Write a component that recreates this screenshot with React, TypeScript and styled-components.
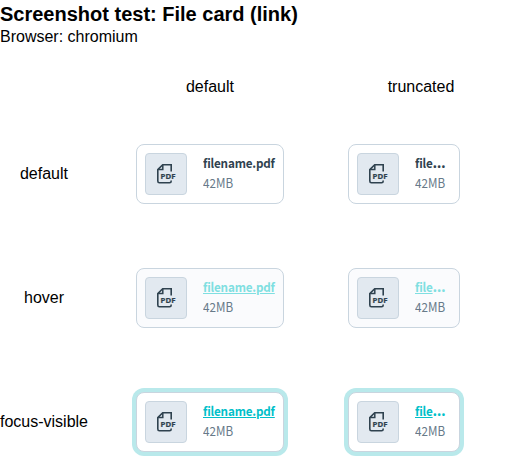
import React from 'react';
import styled, { createGlobalStyle, css } from 'styled-components';

type CardState = 'default' | 'hover' | 'focus-visible';

const GlobalStyle = createGlobalStyle`
  *, *::before, *::after { box-sizing: border-box; }
  body {
    margin: 0;
    background: #fff;
    color: #000;
    font: 16px/18px "Liberation Sans", Arial, sans-serif;
  }
`;

const Page = styled.main`
  width: 512px;
  height: 468px;
  overflow: hidden;
`;

const Title = styled.h1`
  margin: 0;
  padding-top: 3px;
  font-size: 20px;
  line-height: 23px;
  font-weight: 700;
`;

const Subtitle = styled.p`
  margin: 2px 0 0;
`;

const Grid = styled.div`
  display: grid;
  grid-template-columns: 104px 212px 210px;
  grid-template-rows: 51px repeat(3, 124px);
  padding-top: 15px;
`;

const Row = styled.div`
  display: contents;
`;

const Label = styled.div`
  display: flex;
  align-items: center;
  justify-content: center;
  white-space: nowrap;
`;

const RowLabel = styled(Label)`
  padding-right: 16px;
`;

const Cell = styled.div`
  display: flex;
  align-items: center;
  padding: 0 32px;
`;

const Card = styled.article<{ $state: CardState; $truncated: boolean }>`
  display: flex;
  align-items: center;
  gap: 16px;
  width: ${({ $truncated }) => ($truncated ? 112 : 148)}px;
  height: 60px;
  padding: 8px;
  border: 1px solid #c9d5df;
  border-radius: 8px;
  background: ${({ $state }) => ($state === 'hover' ? '#fafbfd' : '#fff')};
  box-shadow: ${({ $state }) => ($state === 'focus-visible' ? '0 0 0 4px #b9e9eb' : 'none')};
`;

const Thumb = styled.div`
  display: flex;
  flex: none;
  align-items: center;
  justify-content: center;
  width: 42px;
  height: 42px;
  border: 1px solid #c9d5df;
  border-radius: 4px;
  background: #e2e9f0;
`;

const Details = styled.div`
  flex: none;
  padding-bottom: 2px;
  font-family: "Noto Sans CJK SC", "Noto Sans", sans-serif;
  font-size: 12.5px;
  line-height: 20px;
  white-space: nowrap;
  transform: scaleX(0.935);
  transform-origin: left;
`;

const nameColors: Record<CardState, string> = {
  default: '#2f424f',
  hover: '#7fdfe1',
  'focus-visible': '#00bfc9',
};

const FileName = styled.div<{ $state: CardState }>`
  font-weight: 700;
  letter-spacing: -0.2px;
  color: ${({ $state }) => nameColors[$state]};
`;

const NameText = styled.span<{ $state: CardState }>`
  ${({ $state }) =>
    $state !== 'default' &&
    css`
      text-decoration: underline;
      text-decoration-thickness: 1px;
      text-underline-offset: 1px;
      text-decoration-skip-ink: auto;
    `}
`;

const Ellipsis = styled.span`
  font-family: "Noto Sans", sans-serif;
  font-size: 16px;
  line-height: 1;
`;

const Size = styled.div`
  color: #677a89;
`;

const PdfIcon = () => (
  <svg width="24" height="24" viewBox="0 0 24 24" fill="none" aria-hidden="true">
    <path
      d="M17.2 9.4V2.7H8.7L3.8 7.6V19Q3.8 20.7 5.4 20.7H15.6Q17.2 20.7 17.2 19V18.6"
      stroke="#2f424f"
      strokeWidth="1.6"
    />
    <path d="M8.8 3V7.6H4" stroke="#2f424f" strokeWidth="1.5" />
    <text
      x="6.6"
      y="17.2"
      fill="#2f424f"
      stroke="#2f424f"
      strokeWidth="0.2"
      fontFamily="Noto Sans, sans-serif"
      fontSize="7.8"
      fontWeight="700"
      textLength="15"
      lengthAdjust="spacing"
    >
      PDF
    </text>
  </svg>
);

const FileCard = ({ state, truncated = false }: { state: CardState; truncated?: boolean }) => (
  <Card $state={state} $truncated={truncated}>
    <Thumb>
      <PdfIcon />
    </Thumb>
    <Details>
      <FileName $state={state}>
        <NameText $state={state}>{truncated ? 'file' : 'filename.pdf'}</NameText>
        {truncated && <Ellipsis>…</Ellipsis>}
      </FileName>
      <Size>42MB</Size>
    </Details>
  </Card>
);

const states: CardState[] = ['default', 'hover', 'focus-visible'];

export default function App() {
  return (
    <Page>
      <GlobalStyle />
      <Title>Screenshot test: File card (link)</Title>
      <Subtitle>Browser: chromium</Subtitle>
      <Grid>
        <Label />
        <Label>default</Label>
        <Label>truncated</Label>
        {states.map((state) => (
          <Row key={state}>
            <RowLabel>{state}</RowLabel>
            <Cell>
              <FileCard state={state} />
            </Cell>
            <Cell>
              <FileCard state={state} truncated />
            </Cell>
          </Row>
        ))}
      </Grid>
    </Page>
  );
}
